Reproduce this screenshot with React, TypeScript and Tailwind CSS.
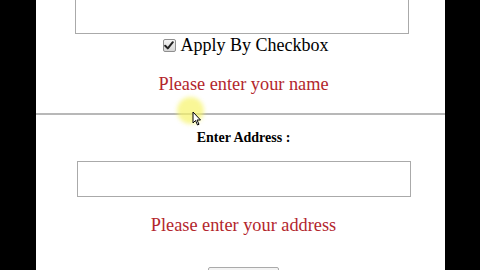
import React from 'react';

const serif = { fontFamily: '"Liberation Serif", "Times New Roman", serif' };

export default function App() {
  return (
    <div className="flex w-[480px] h-[270px] overflow-hidden bg-black" style={serif}>
      <div className="w-[36px] shrink-0 bg-black" />

      <div className="relative w-[409px] shrink-0 bg-white flex flex-col">
        {/* name field (scrolled partly off top) */}
        <div className="shrink-0 mt-[-1px] h-[35px] ml-[39px] w-[334px] border border-[#aaaaaa] bg-white" />

        <label className="shrink-0 mt-[3px] h-[16px] flex items-center justify-center pl-[10px] text-[18px] leading-none text-black">
          <span className="w-[13px] h-[13px] mr-[5px] border border-[#8f8f8f] rounded-[2px] bg-gradient-to-b from-[#f4f4f4] to-[#d6d6d6] flex items-center justify-center">
            <svg width="10" height="9" viewBox="0 0 10 9">
              <path d="M1.2 4.8 L3.8 7.4 L8.8 1.2" fill="none" stroke="#222" strokeWidth="2" strokeLinecap="round" strokeLinejoin="round" />
            </svg>
          </span>
          Apply By Checkbox
        </label>

        <p className="shrink-0 mt-[20px] text-center pl-[6px] text-[18.3px] leading-[22px] text-[#b3262d]">
          Please enter your name
        </p>

        <hr className="shrink-0 mt-[18px] border-0 border-t-2 border-[#b8b8b8]" />

        <p className="shrink-0 mt-[15px] text-center pl-[6px] text-[14px] font-bold leading-[16px] text-black">
          Enter Address :
        </p>

        <div className="shrink-0 mt-[15px] h-[36px] ml-[41px] w-[334px] border border-[#aaaaaa] bg-white" />

        <p className="shrink-0 mt-[17px] text-center pl-[6px] text-[18.3px] leading-[22px] text-[#b3262d]">
          Please enter your address
        </p>

        <div className="shrink-0 mt-[31px] ml-[172px] w-[71px] h-[10px] border border-[#aaaaaa] bg-[#f3f3f3] rounded-[2px]" />

        {/* cursor highlight */}
        <div className="absolute left-[141px] top-[97px] w-[27px] h-[27px] rounded-full bg-[#f7f36a]/70 blur-[2px]" />
        <svg className="absolute left-[156px] top-[111px]" width="10" height="15" viewBox="0 0 10 15">
          <path d="M1 1 L1 12 L3.5 9.5 L5.5 14 L7 13.3 L5 9 L8.5 9 Z" fill="#fff" stroke="#000" strokeWidth="1" strokeLinejoin="round" />
        </svg>
      </div>

      <div className="flex-1 bg-black" />
    </div>
  );
}
